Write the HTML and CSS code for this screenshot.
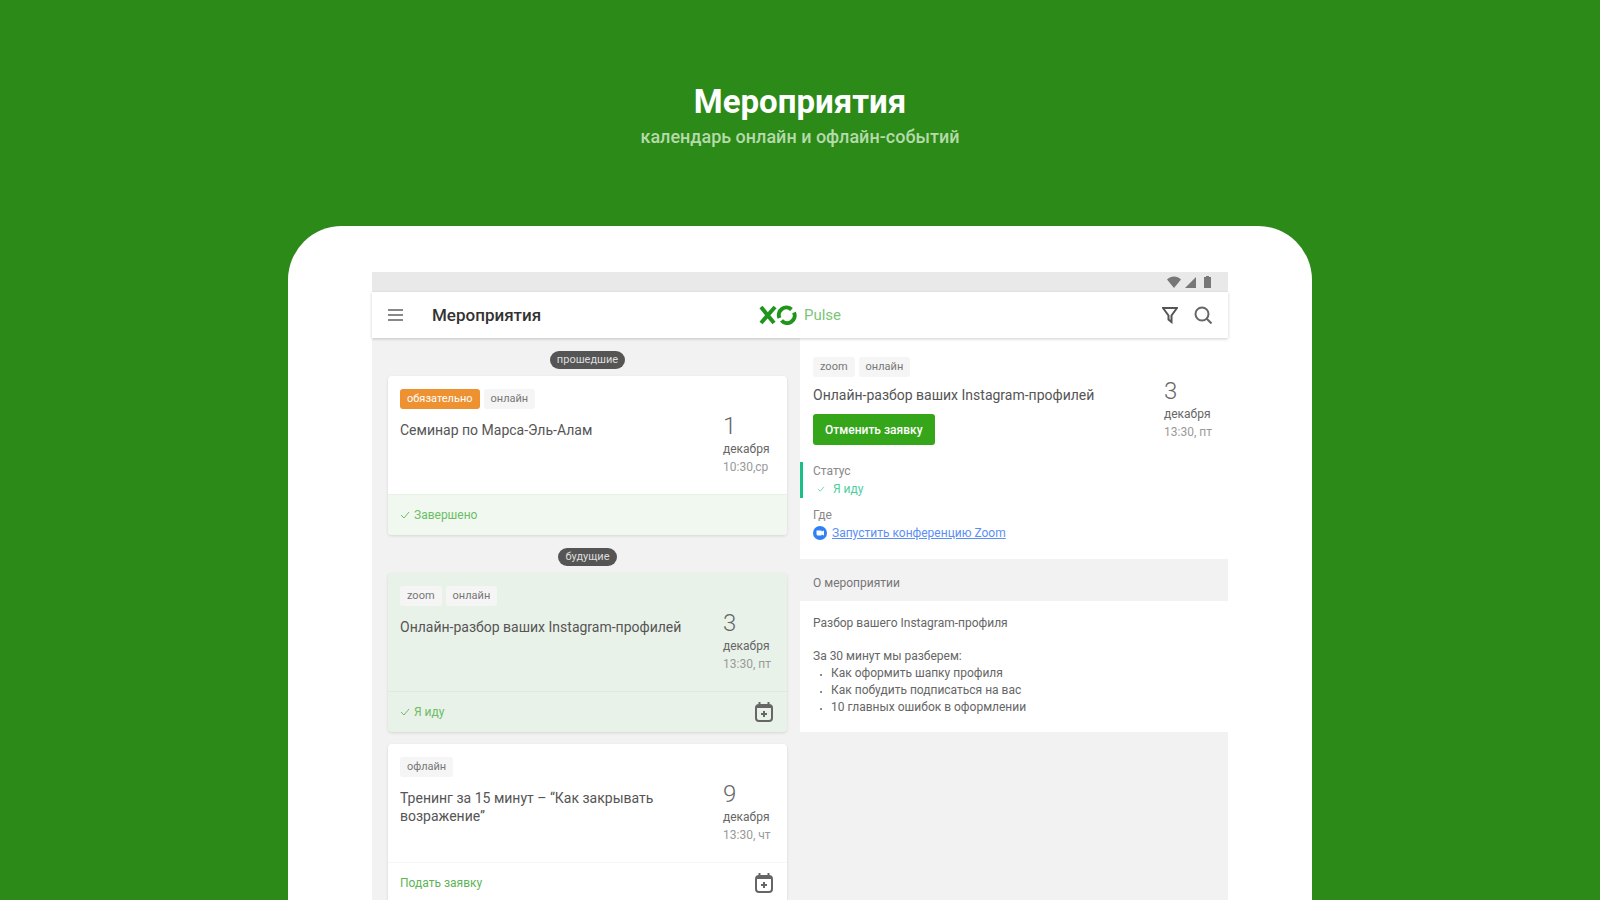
FILE: index.html
```
<!DOCTYPE html>
<html lang="ru">
<head>
    <meta charset="UTF-8">
    <meta name="viewport" content="width=device-width, initial-scale=1.0">
    <title>XO Pulse – Мероприятия</title>
    <link rel="stylesheet" href="styles.css">
</head>
<body>
    <header class="promo">
        <h1>Мероприятия</h1>
        <p>календарь онлайн и офлайн-событий</p>
    </header>

    <div class="tablet">
        <div class="screen">
            <div class="status-bar">
                <svg width="14" height="12" viewBox="0 0 14 12"><path d="M0 3.5C4-.6 10-.6 14 3.5L7 12z"/></svg>
                <svg width="11" height="11" viewBox="0 0 11 11"><path d="M11 0v11H0z"/></svg>
                <svg class="battery" width="7" height="12" viewBox="0 0 7 12"><path d="M2 0h3v1h2v11H0V1h2z"/></svg>
            </div>

            <div class="app-bar">
                <div class="heading">
                    <button class="icon-button" aria-label="Меню">
                        <svg width="16" height="14" viewBox="0 0 16 14" fill="none" stroke="#888" stroke-width="2"><path d="M0 2h15M0 7h15M0 12h15"/></svg>
                    </button>
                    <h2>Мероприятия</h2>
                </div>
                <div class="logo">
                    <svg width="38" height="20" viewBox="0 0 38 20" fill="none" stroke="#1f961a" stroke-width="4">
                        <path d="M2 2l13 16M16 2L2 18"/>
                        <path d="M20.500 13a7.500 7.500 0 0 1 12-8.500M35 7.500a7.500 7.500 0 0 1-12.500 8"/>
                    </svg>
                    <span>Pulse</span>
                </div>
                <div class="actions">
                    <button class="icon-button" aria-label="Фильтр">
                        <svg width="16" height="18" viewBox="0 0 16 18" fill="none" stroke="#555" stroke-width="2"><path d="M1 2h14L9.500 9.500V16l-3-2.500v-4z"/></svg>
                    </button>
                    <button class="icon-button" aria-label="Поиск">
                        <svg width="18" height="18" viewBox="0 0 18 18" fill="none" stroke="#666" stroke-width="2"><circle cx="8" cy="8" r="6.500"/><path d="M12.500 12.500L17.500 17.500"/></svg>
                    </button>
                </div>
            </div>

            <div class="panes">
                <main class="events">
                    <div class="divider-pill">прошедшие</div>

                    <article class="card">
                        <div class="card-body">
                            <div class="card-info">
                                <div class="tags"><span class="tag required">обязательно</span><span class="tag">онлайн</span></div>
                                <h3>Семинар по Марса-Эль-Алам</h3>
                            </div>
                            <div class="date"><b>1</b><span>декабря</span><time>10:30,ср</time></div>
                        </div>
                        <div class="card-footer done">
                            <svg class="check" width="10" height="8" viewBox="0 0 10 8"><path d="M1 4l3 3 5-6"/></svg>
                            <span>Завершено</span>
                        </div>
                    </article>

                    <div class="divider-pill">будущие</div>

                    <article class="card selected">
                        <div class="card-body">
                            <div class="card-info">
                                <div class="tags"><span class="tag">zoom</span><span class="tag">онлайн</span></div>
                                <h3>Онлайн-разбор ваших Instagram-профилей</h3>
                            </div>
                            <div class="date"><b>3</b><span>декабря</span><time>13:30, пт</time></div>
                        </div>
                        <div class="card-footer">
                            <svg class="check" width="10" height="8" viewBox="0 0 10 8"><path d="M1 4l3 3 5-6"/></svg>
                            <span>Я иду</span>
                            <button class="icon-button calendar" aria-label="В календарь">
                                <svg width="18" height="20" viewBox="0 0 18 20" fill="none" stroke="#666" stroke-width="2"><rect x="1" y="3" width="16" height="16" rx="3"/><path d="M1 5h16M4.500 0v4M13.500 0v4M6 12h6M9 9v6"/></svg>
                            </button>
                        </div>
                    </article>

                    <article class="card">
                        <div class="card-body">
                            <div class="card-info">
                                <div class="tags"><span class="tag">офлайн</span></div>
                                <h3>Тренинг за 15 минут – “Как закрывать возражение”</h3>
                            </div>
                            <div class="date"><b>9</b><span>декабря</span><time>13:30, чт</time></div>
                        </div>
                        <div class="card-footer">
                            <a href="#">Подать заявку</a>
                            <button class="icon-button calendar" aria-label="В календарь">
                                <svg width="18" height="20" viewBox="0 0 18 20" fill="none" stroke="#666" stroke-width="2"><rect x="1" y="3" width="16" height="16" rx="3"/><path d="M1 5h16M4.500 0v4M13.500 0v4M6 12h6M9 9v6"/></svg>
                            </button>
                        </div>
                    </article>
                </main>

                <section class="details">
                    <div class="summary">
                        <div class="summary-info">
                            <div class="tags"><span class="tag">zoom</span><span class="tag">онлайн</span></div>
                            <h3>Онлайн-разбор ваших Instagram-профилей</h3>
                            <button class="cancel-button">Отменить заявку</button>
                            <div class="field status">
                                <div class="label">Статус</div>
                                <div class="value"><svg class="check" width="8" height="6" viewBox="0 0 10 8"><path d="M1 4l3 3 5-6"/></svg>Я иду</div>
                            </div>
                            <div class="field">
                                <div class="label">Где</div>
                                <div class="place">
                                    <svg width="14" height="14" viewBox="0 0 14 14"><circle cx="7" cy="7" r="7" fill="#2f80f5"/><path d="M3.500 4.500h5v1l2.500-1v5l-2.500-1v1H5A1.500 1.500 0 0 1 3.500 8z" fill="#fff"/></svg>
                                    <a href="#">Запустить конференцию Zoom</a>
                                </div>
                            </div>
                        </div>
                        <div class="date"><b>3</b><span>декабря</span><time>13:30, пт</time></div>
                    </div>
                    <h4>О мероприятии</h4>
                    <div class="about">
                        <p>Разбор вашего Instagram-профиля</p>
                        <p>За 30 минут мы разберем:</p>
                        <ul>
                            <li>Как оформить шапку профиля</li>
                            <li>Как побудить подписаться на вас</li>
                            <li>10 главных ошибок в оформлении</li>
                        </ul>
                    </div>
                </section>
            </div>
        </div>
    </div>
</body>
</html>
```
FILE: styles.css
```
* {
    box-sizing: border-box;
}
body {
    margin: 0;
    height: 100vh;
    display: flex;
    flex-direction: column;
    align-items: center;
    overflow: hidden;
    background: #2c8a18;
    color: #666;
    font-family: Roboto, "Noto Sans", sans-serif;
    font-size: 12px;
}
h1, h2, h3, h4, p, ul {
    margin: 0;
    font-weight: 400;
}
button {
    font-family: inherit;
    border: none;
    cursor: pointer;
}
.promo {
    height: 226px;
    padding-top: 82px;
    text-align: center;
    flex-shrink: 0;
}
.promo h1 {
    color: #fff;
    font-size: 33px;
    line-height: 40px;
    font-weight: 700;
}
.promo p {
    color: #b4dba9;
    font-size: 18px;
    line-height: 30px;
    font-weight: 500;
}
.tablet {
    width: 64%;
    flex: 1;
    min-height: 0;
    padding: 46px 84px 0;
    background: #fff;
    border-radius: 54px 54px 0 0;
}
.screen {
    height: 100%;
    display: flex;
    flex-direction: column;
    background: #f2f2f2;
}
.status-bar {
    height: 20px;
    display: flex;
    align-items: center;
    justify-content: flex-end;
    gap: 4px;
    padding-right: 17px;
    background: #e9e9e9;
    fill: #777;
    flex-shrink: 0;
}
.battery {
    margin-left: 4px;
}
.app-bar {
    height: 46px;
    display: grid;
    grid-template-columns: 1fr auto 1fr;
    align-items: center;
    padding: 0 16px;
    background: #fff;
    box-shadow: 0 1px 3px rgba(0, 0, 0, 0.2);
    z-index: 1;
    flex-shrink: 0;
}
.heading {
    display: flex;
    align-items: center;
    gap: 28px;
}
.icon-button {
    display: flex;
    padding: 0;
    background: none;
}
.app-bar h2 {
    color: #333;
    font-size: 17px;
    font-weight: 500;
}
.logo {
    display: flex;
    align-items: center;
    gap: 7px;
    color: #7cc576;
    font-size: 15px;
}
.actions {
    display: flex;
    align-items: center;
    justify-content: flex-end;
    gap: 16px;
}
.panes {
    flex: 1;
    min-height: 0;
    display: grid;
    grid-template-columns: 1fr 1fr;
}
.events {
    padding: 0 13px 0 16px;
}
.divider-pill {
    width: fit-content;
    margin: 13px auto 7px;
    padding: 0 7px;
    border-radius: 9px;
    background: #555;
    color: #ddd;
    font-size: 11px;
    line-height: 18px;
}
.card {
    margin-bottom: 12px;
    background: #fff;
    border-radius: 4px;
    box-shadow: 0 1px 3px rgba(0, 0, 0, 0.12);
    overflow: hidden;
}
.card.selected {
    background: #e9f2e9;
}
.card-body {
    height: 118px;
    display: flex;
    justify-content: space-between;
    padding: 13px 12px 0;
}
.card-info {
    max-width: 290px;
}
.tags {
    display: flex;
    gap: 4px;
    margin-bottom: 12px;
}
.tag {
    padding: 0 7px;
    border-radius: 3px;
    background: #f5f5f5;
    color: #777;
    font-size: 11px;
    line-height: 20px;
}
.tag.required {
    background: #ee9130;
    color: #fff;
}
h3 {
    color: #555;
    font-size: 14px;
    line-height: 18px;
}
.date {
    width: 52px;
    margin-top: 23px;
    line-height: 18px;
    flex-shrink: 0;
}
.date b {
    display: block;
    font-size: 24px;
    line-height: 28px;
    font-weight: 300;
}
.date span,
.date time {
    display: block;
}
.date time {
    color: #999;
}
.card-footer {
    height: 41px;
    display: flex;
    align-items: center;
    gap: 4px;
    padding: 0 14px 0 12px;
    border-top: 1px solid rgba(0, 0, 0, 0.03);
    color: #6cbd65;
}
.card-footer.done {
    background: #f0f8f0;
}
.card-footer a {
    color: #5db455;
    text-decoration: none;
}
.calendar {
    margin-left: auto;
}
.check {
    fill: none;
    stroke: currentColor;
}
.summary {
    height: 221px;
    display: flex;
    justify-content: space-between;
    padding: 19px 12px 0 13px;
    background: #fff;
}
.details .tags {
    margin-bottom: 9px;
}
.details .date {
    margin-top: 20px;
}
.cancel-button {
    height: 31px;
    margin: 10px 0 17px;
    padding: 0 12px;
    border-radius: 3px;
    background: #35a51a;
    color: #fff;
    font-size: 12px;
    font-weight: 500;
}
.field {
    margin-bottom: 8px;
    line-height: 18px;
}
.label {
    color: #888;
}
.field.status {
    margin-left: -13px;
    padding-left: 10px;
    border-left: 3px solid #19bf86;
}
.value {
    display: flex;
    align-items: center;
    gap: 8px;
    padding-left: 4px;
    color: #4fcf9f;
}
.place {
    display: flex;
    align-items: center;
    gap: 5px;
}
.place a {
    color: #5b8ff5;
}
h4 {
    padding: 15px 13px 9px;
    color: #777;
    font-size: 12px;
    line-height: 18px;
}
.about {
    height: 131px;
    padding: 14px 13px;
    background: #fff;
    line-height: 17px;
}
.about p + p {
    margin-top: 16px;
}
.about ul {
    padding-left: 18px;
}
.about li::marker {
    font-size: 8px;
}
```
